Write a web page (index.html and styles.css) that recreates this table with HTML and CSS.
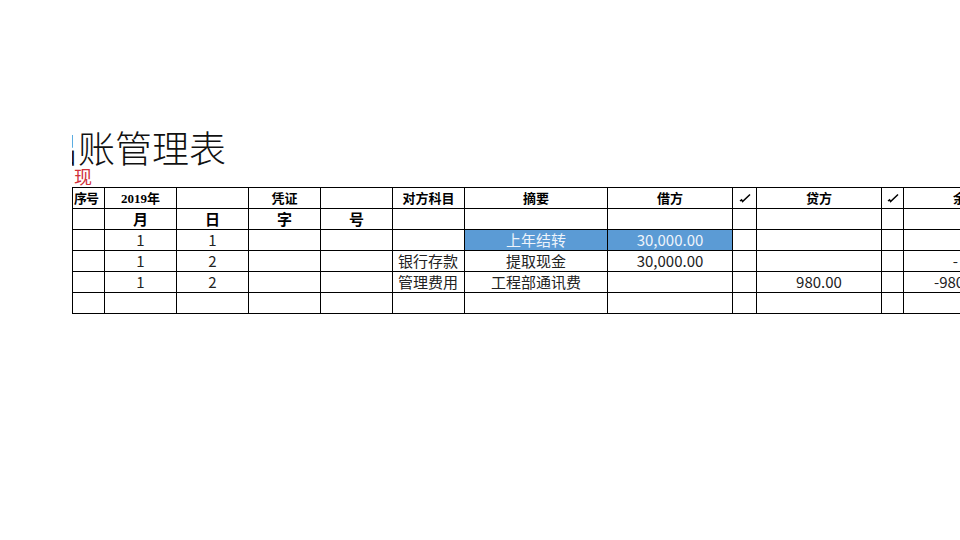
FILE: index.html
```html
<!DOCTYPE html>
<html lang="zh">
<head>
<meta charset="utf-8">
<link rel="stylesheet" href="styles.css">
</head>
<body>
<div class="sheet">
  <div class="title"><span class="title-text">出账管理表</span></div>
  <div class="subtitle">现</div>
  <table class="ledger">
    <colgroup>
      <col class="c-seq"><col class="c72"><col class="c72"><col class="c72"><col class="c72"><col class="c72">
      <col class="c-sum"><col class="c-amt"><col class="c-chk"><col class="c-amt"><col class="c-chk2"><col class="c-amt">
    </colgroup>
    <tr class="h1">
      <td>序号</td><td><span class="num">2019</span>年</td><td></td><td>凭证</td><td></td><td>对方科目</td>
      <td>摘要</td><td>借方</td>
      <td><svg class="check" viewBox="0 0 12 10" width="12" height="10"><path d="M1 8 L2.6 6.8 L3.6 8.6 L11 1.5"/></svg></td>
      <td>贷方</td>
      <td><svg class="check" viewBox="0 0 12 10" width="12" height="10"><path d="M1 8 L2.6 6.8 L3.6 8.6 L11 1.5"/></svg></td>
      <td class="bal-h">余额</td>
    </tr>
    <tr class="h2">
      <td></td><td>月</td><td>日</td><td>字</td><td>号</td><td></td><td></td><td></td><td></td><td></td><td></td><td></td>
    </tr>
    <tr class="data">
      <td></td><td>1</td><td>1</td><td></td><td></td><td></td>
      <td class="hl">上年结转</td><td class="hl">30,000.00</td><td></td><td></td><td></td><td></td>
    </tr>
    <tr class="data">
      <td></td><td>1</td><td>2</td><td></td><td></td><td class="left">银行存款</td>
      <td>提取现金</td><td>30,000.00</td><td></td><td></td><td></td><td class="bal dash">-</td>
    </tr>
    <tr class="data">
      <td></td><td>1</td><td>2</td><td></td><td></td><td class="left">管理费用</td>
      <td>工程部通讯费</td><td></td><td></td><td>980.00</td><td></td><td class="bal">-980.00</td>
    </tr>
    <tr class="data">
      <td></td><td></td><td></td><td></td><td></td><td></td><td></td><td></td><td></td><td></td><td></td><td></td>
    </tr>
  </table>
</div>
</body>
</html>
```

FILE: styles.css
```css
html, body {
  margin: 0;
  padding: 0;
  background: #fff;
  overflow: hidden;
  width: 960px;
  height: 540px;
}

.sheet {
  padding-top: 128px;
  padding-left: 72px;
  font-family: "Noto Sans CJK SC", "Noto Sans", sans-serif;
  color: #222;
}

.title {
  width: 300px;
  height: 38px;
  overflow: hidden;
  white-space: nowrap;
}

.title-text {
  display: block;
  margin-left: -31px;
  font-size: 37px;
  line-height: 38px;
  font-weight: 300;
  color: #111;
}

.subtitle {
  height: 21px;
  font-size: 18px;
  line-height: 20px;
  color: #d0303a;
  padding-left: 2px;
}

.ledger {
  border-collapse: collapse;
  table-layout: fixed;
  width: 956px;
}

.c-seq { width: 32px; }
.c72 { width: 72px; }
.c-sum { width: 143px; }
.c-amt { width: 125px; }
.c-chk { width: 24px; }
.c-chk2 { width: 22px; }

.ledger td {
  border: 1px solid #000;
  height: 20px;
  padding: 0;
  text-align: center;
  vertical-align: middle;
  white-space: nowrap;
  overflow: hidden;
}

.h1 td {
  font-size: 13px;
  font-weight: 700;
  line-height: 16px;
  color: #000;
}

.h1 .num {
  font-family: "Liberation Serif", serif;
  font-weight: 700;
  font-size: 13px;
}

.h1 td:first-child {
  text-align: left;
  padding-left: 1px;
  letter-spacing: -1px;
}

.check {
  display: block;
  margin: 0 auto;
  fill: none;
  stroke: #000;
  stroke-width: 1.5;
}

.h2 td {
  font-size: 15px;
  font-weight: 700;
  line-height: 18px;
  color: #000;
}

.data td {
  font-size: 15px;
  line-height: 18px;
  color: #222;
}

.data td.left {
  text-align: left;
  padding-left: 5px;
}

.data td.hl {
  background: #5b9bd5;
  color: #eef4fb;
}

.data td.bal {
  text-align: right;
  padding-right: 43px;
}

.data td.bal.dash {
  padding-right: 70px;
}
```
